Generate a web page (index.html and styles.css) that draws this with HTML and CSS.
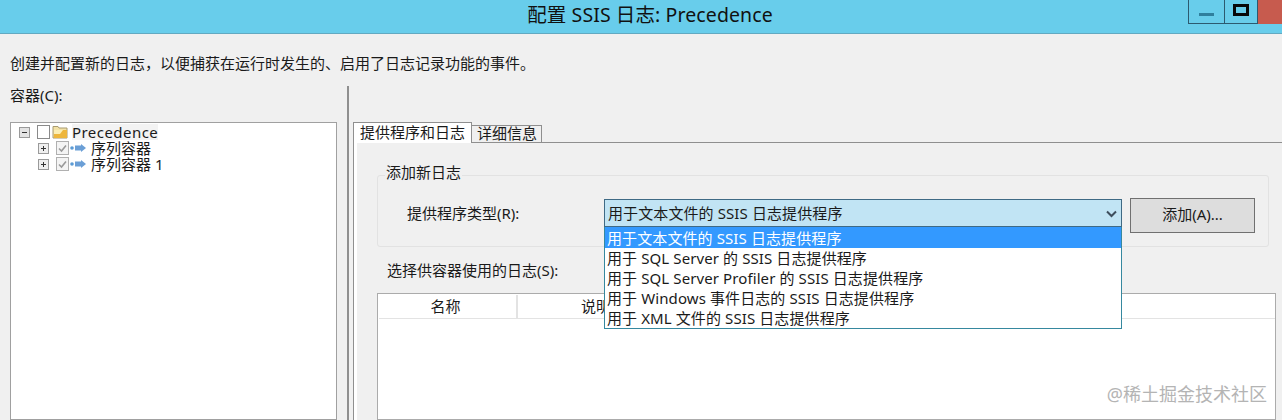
FILE: index.html
```html
<!DOCTYPE html>
<html lang="zh-CN">
<head>
  <meta charset="UTF-8">
  <title>配置 SSIS 日志: Precedence</title>
  <link rel="stylesheet" href="styles.css">
</head>
<body>
  <div class="window">
    <header class="title-bar">
      <span class="title-text">配置 SSIS 日志: Precedence</span>
      <div class="window-buttons">
        <div class="win-btn win-min"><span class="min-glyph"></span></div>
        <div class="win-btn win-max"><span class="max-glyph"></span></div>
        <div class="win-close"></div>
      </div>
    </header>

    <p class="intro">创建并配置新的日志，以便捕获在运行时发生的、启用了日志记录功能的事件。</p>

    <div class="split">
      <section class="left-pane">
        <div class="pane-label">容器(C):</div>
        <div class="tree">
          <div class="tree-row tree-root">
            <span class="expander">
              <svg width="11" height="11" viewBox="0 0 11 11"><rect x="0.5" y="0.5" width="10" height="10" fill="#e4e4e4" stroke="#9a9a9a"/><path d="M3 5.500h5" stroke="#333"/></svg>
            </span>
            <span class="check check-empty"></span>
            <svg class="folder" width="16" height="14" viewBox="0 0 16 14">
              <path d="M1 3V1.500h5L7 3h8v10H1z" fill="#f3e2a6" stroke="#a89a70"/>
              <path d="M2 5h13v8H2z" fill="#eeb63c"/>
              <path d="M2 5h9l-3 4H2z" fill="#fbeeb4"/>
            </svg>
            <span class="tree-text tree-selected">Precedence</span>
          </div>
          <div class="tree-row tree-child">
            <span class="expander">
              <svg width="11" height="11" viewBox="0 0 11 11"><rect x="0.5" y="0.5" width="10" height="10" fill="#efefef" stroke="#9a9a9a"/><path d="M3 5.500h5M5.500 3v5" stroke="#333"/></svg>
            </span>
            <span class="check">
              <svg width="11" height="11" viewBox="0 0 11 11"><path d="M2 5.500l2.500 2.500L9 2.500" fill="none" stroke="#9a9a9a" stroke-width="1.6"/></svg>
            </span>
            <svg class="seq" width="17" height="10" viewBox="0 0 17 10">
              <circle cx="2" cy="5" r="1.800" fill="#5b9bd5"/>
              <path d="M5 2.500h6V1l5 4-5 4V7.500H5z" fill="#6b9fd6"/>
            </svg>
            <span class="tree-text">序列容器</span>
          </div>
          <div class="tree-row tree-child">
            <span class="expander">
              <svg width="11" height="11" viewBox="0 0 11 11"><rect x="0.5" y="0.5" width="10" height="10" fill="#efefef" stroke="#9a9a9a"/><path d="M3 5.500h5M5.500 3v5" stroke="#333"/></svg>
            </span>
            <span class="check">
              <svg width="11" height="11" viewBox="0 0 11 11"><path d="M2 5.500l2.500 2.500L9 2.500" fill="none" stroke="#9a9a9a" stroke-width="1.6"/></svg>
            </span>
            <svg class="seq" width="17" height="10" viewBox="0 0 17 10">
              <circle cx="2" cy="5" r="1.800" fill="#5b9bd5"/>
              <path d="M5 2.500h6V1l5 4-5 4V7.500H5z" fill="#6b9fd6"/>
            </svg>
            <span class="tree-text">序列容器 1</span>
          </div>
        </div>
      </section>

      <div class="splitter"></div>

      <section class="right-pane">
        <div class="tabs">
          <div class="tab tab-active">提供程序和日志</div>
          <div class="tab">详细信息</div>
        </div>
        <div class="tab-body">
          <fieldset class="group">
            <legend class="group-title">添加新日志</legend>
            <div class="provider-row">
              <label class="provider-label">提供程序类型(R):</label>
              <div class="combo">
                <span>用于文本文件的 SSIS 日志提供程序</span>
                <svg class="combo-arrow" width="11" height="8" viewBox="0 0 11 8"><path d="M1 1.500l4.500 4.500L10 1.500" fill="none" stroke="#3d4d5c" stroke-width="2"/></svg>
                <ul class="combo-list">
                  <li class="combo-item combo-current">用于文本文件的 SSIS 日志提供程序</li>
                  <li class="combo-item">用于 SQL Server 的 SSIS 日志提供程序</li>
                  <li class="combo-item">用于 SQL Server Profiler 的 SSIS 日志提供程序</li>
                  <li class="combo-item">用于 Windows 事件日志的 SSIS 日志提供程序</li>
                  <li class="combo-item">用于 XML 文件的 SSIS 日志提供程序</li>
                </ul>
              </div>
              <button class="add-btn">添加(A)...</button>
            </div>
          </fieldset>

          <div class="logs-label">选择供容器使用的日志(S):</div>
          <div class="logs-table">
            <div class="logs-head">
              <div class="col col-name">名称</div>
              <div class="col col-desc">说明</div>
            </div>
          </div>
        </div>
      </section>
    </div>
  </div>

  <div class="watermark">@稀土掘金技术社区</div>
</body>
</html>
```

FILE: styles.css
```css
* {
  box-sizing: border-box;
}

html, body {
  margin: 0;
  padding: 0;
  height: 420px;
  overflow: hidden;
}

body {
  background: #f0f0f0;
  color: #1a1a1a;
  font-family: "Noto Sans", "Noto Sans CJK SC", sans-serif;
  font-size: 15px;
  line-height: 20px;
}

.window {
  height: 420px;
  display: flex;
  flex-direction: column;
}

/* title bar */
.title-bar {
  flex: none;
  height: 34px;
  background: #68cdeb;
  border-bottom: 1px solid #62a9c1;
  display: flex;
  justify-content: center;
  position: relative;
}

.title-text {
  font-size: 19.5px;
  line-height: 30px;
  margin-left: 18px;
  letter-spacing: 0.1px;
  color: #111;
}

.window-buttons {
  position: absolute;
  top: 0;
  right: 0;
  display: flex;
}

.win-btn {
  height: 24px;
  border: 1px solid #2c5a70;
  border-top: 0;
  border-right: 0;
  display: flex;
  justify-content: center;
}

.win-min {
  width: 36px;
}

.win-max {
  width: 33px;
}

.min-glyph {
  width: 15px;
  height: 3px;
  margin-top: 13px;
  background: #2f7f9d;
}

.max-glyph {
  width: 16px;
  height: 12px;
  margin-top: 4px;
  border: 3px solid #07080a;
}

.win-close {
  width: 25px;
  height: 24px;
  background: #c75b4e;
  border-left: 1px solid #2c5a70;
}

.intro {
  flex: none;
  margin: 19px 0 13px 10px;
  height: 20px;
}

/* panes */
.split {
  flex: 1;
  display: flex;
  min-height: 0;
}

.left-pane {
  width: 337px;
  margin-left: 10px;
  display: flex;
  flex-direction: column;
}

.pane-label {
  height: 20px;
  line-height: 18px;
  margin-bottom: 16px;
}

.tree {
  flex: 1;
  background: #fff;
  border: 1px solid #a0a0a0;
  padding-top: 1px;
  margin-right: 10px;
}

.tree-row {
  display: flex;
  align-items: center;
  height: 16px;
}

.tree-root {
  padding-left: 8px;
}

.tree-child {
  padding-left: 27px;
}

.expander {
  width: 11px;
  height: 11px;
  display: flex;
  margin-right: 7px;
}

.check {
  width: 13px;
  height: 14px;
  border: 1px solid #b0b0b0;
  background: #f4f4f4;
  display: flex;
  align-items: center;
  justify-content: center;
}

.check-empty {
  background: #fff;
  border-color: #8a8a8a;
  margin-right: 2px;
}

.tree-child .check {
  margin-right: 1px;
}

.folder {
  margin-right: 4px;
}

.seq {
  margin-right: 4px;
}

.tree-text {
  line-height: 16px;
  white-space: nowrap;
}

.tree-selected {
  background: #f3f3f3;
  letter-spacing: 0.45px;
}

.splitter {
  width: 2px;
  background: #8f8f8f;
}

.right-pane {
  flex: 1;
  padding: 36px 0 0 4px;
  display: flex;
  flex-direction: column;
  min-width: 0;
}

/* tabs */
.tabs {
  display: flex;
  align-items: flex-end;
  height: 20px;
  position: relative;
  z-index: 1;
}

.tab {
  height: 17px;
  padding: 0 4px 0 5px;
  border: 1px solid #8f8f8f;
  border-bottom: 0;
  line-height: 15px;
}

.tab-active {
  height: 21px;
  margin-bottom: -1px;
  padding: 0 6px;
  background: #fff;
  line-height: 18px;
}

.tab + .tab {
  border-left: 0;
}

.tab-body {
  flex: 1;
  min-height: 0;
  display: flex;
  flex-direction: column;
  border-top: 1px solid #8f8f8f;
  border-left: 1px solid #8f8f8f;
  padding: 22px 6px 0 23px;
  box-shadow: inset 3px 0 0 #fff;
}

.group {
  flex: none;
  margin: 0 7px 0 0;
  padding: 0 0 0 29px;
  height: 82px;
  min-width: 0;
  border: 1px solid #e2e2e2;
  border-radius: 3px;
}

.group-title {
  padding: 0 1px 5px;
  margin-left: -22px;
  line-height: 1;
}

.provider-row {
  display: flex;
  align-items: flex-start;
  margin-top: 14px;
}

.provider-label {
  flex: none;
  width: 197px;
  line-height: 28px;
}

.combo {
  flex: none;
  width: 518px;
  height: 28px;
  background: #c1e4f4;
  border: 1px solid #3f6a85;
  padding-left: 3px;
  line-height: 26px;
  letter-spacing: 0.1px;
  position: relative;
  white-space: nowrap;
}

.combo-arrow {
  position: absolute;
  top: 10px;
  right: 4px;
}

.combo-list {
  position: absolute;
  top: 27px;
  left: -1px;
  width: 518px;
  margin: 0;
  padding: 0;
  list-style: none;
  background: #fff;
  border: 1px solid #36889f;
  border-top: 0;
  color: #1a1a1a;
  z-index: 2;
}

.combo-item {
  height: 20px;
  padding-left: 2px;
  line-height: 20px;
}

.combo-current {
  height: 21px;
  padding-top: 1px;
  background: #3399ff;
  color: #fff;
}

.add-btn {
  flex: none;
  width: 125px;
  height: 35px;
  margin: -1px 0 0 8px;
  background: #dddddd;
  border: 1px solid #707070;
  color: #1a1a1a;
  font: inherit;
  padding: 0 0 4px;
}

.logs-label {
  flex: none;
  height: 20px;
  line-height: 16px;
  margin: 15px 0 11px 10px;
}

.logs-table {
  flex: 1;
  background: #fff;
  border: 1px solid #ababab;
  padding: 1px 0 0 1px;
}

.logs-head {
  display: flex;
  height: 24px;
  border-bottom: 1px solid #e3e3e3;
  text-align: center;
  line-height: 23px;
}

.col-name {
  width: 139px;
  padding-right: 4px;
  border-right: 2px solid #e3e3e3;
}

.col-desc {
  width: 156px;
}

.watermark {
  position: absolute;
  right: 15px;
  bottom: 16px;
  color: #b4b4b4;
  font-size: 18px;
  line-height: 20px;
}
```
